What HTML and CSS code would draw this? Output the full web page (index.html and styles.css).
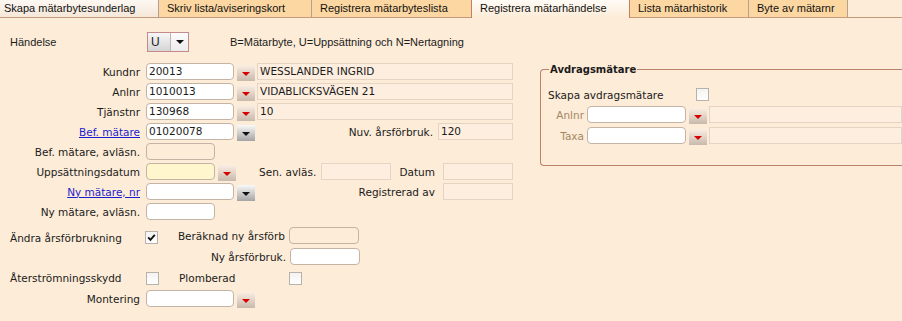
FILE: index.html
```html
<!DOCTYPE html>
<html>

<head>
    <title>Registrera mätarhändelse</title>
    <link rel="stylesheet" href="styles.css">
</head>

<body>
    <nav class="tabs">
        <div class="tab tab-1 is-hover">Skapa mätarbytesunderlag</div>
        <div class="tab tab-2">Skriv lista/aviseringskort</div>
        <div class="tab tab-3">Registrera mätarbyteslista</div>
        <div class="tab tab-4 is-active">Registrera mätarhändelse</div>
        <div class="tab tab-5">Lista mätarhistorik</div>
        <div class="tab tab-6">Byte av mätarnr</div>
    </nav>

    <div class="event-row">
        <span class="event-label">Händelse</span>
        <div class="combo">
            <span class="combo-value">U</span>
            <span class="combo-arrow"></span>
        </div>
        <span class="event-hint">B=Mätarbyte, U=Uppsättning och N=Nertagning</span>
    </div>

    <div class="form-body">
        <div class="form-left">
            <div class="row">
                <span class="lbl">Kundnr</span>
                <span class="inp w-88">20013</span>
                <span class="btn-drop"></span>
                <span class="out out-wide">WESSLANDER INGRID</span>
            </div>
            <div class="row">
                <span class="lbl">Anlnr</span>
                <span class="inp w-88">1010013</span>
                <span class="btn-drop"></span>
                <span class="out out-wide">VIDABLICKSVÄGEN 21</span>
            </div>
            <div class="row">
                <span class="lbl">Tjänstnr</span>
                <span class="inp w-88">130968</span>
                <span class="btn-drop"></span>
                <span class="out out-wide">10</span>
            </div>
            <div class="row">
                <span class="lbl"><a href="#">Bef. mätare</a></span>
                <span class="inp w-88">01020078</span>
                <span class="btn-drop is-dark"></span>
                <span class="lbl-fill">Nuv. årsförbruk.</span>
                <span class="out w-75">120</span>
            </div>
            <div class="row">
                <span class="lbl">Bef. mätare, avläsn.</span>
                <span class="inp w-69 is-readonly"></span>
            </div>
            <div class="row">
                <span class="lbl">Uppsättningsdatum</span>
                <span class="inp w-69 is-date"></span>
                <span class="btn-drop"></span>
                <span class="lbl-sen">Sen. avläs.</span>
                <span class="out w-70"></span>
                <span class="lbl-fill lbl-gap">Datum</span>
                <span class="out w-70"></span>
            </div>
            <div class="row">
                <span class="lbl"><a href="#">Ny mätare, nr</a></span>
                <span class="inp w-88"></span>
                <span class="btn-drop is-dark"></span>
                <span class="lbl-fill lbl-gap">Registrerad av</span>
                <span class="out w-70"></span>
            </div>
            <div class="row">
                <span class="lbl">Ny mätare, avläsn.</span>
                <span class="inp w-69"></span>
            </div>

            <div class="row row-check">
                <span class="lbl lbl-left">Ändra årsförbrukning</span>
                <span class="chk is-checked">
                    <svg width="11" height="11" viewBox="0 0 11 11"><path d="M2.2 5.4 L4.4 7.8 L8.8 2.8" fill="none" stroke="#111" stroke-width="1.9"/></svg>
                </span>
                <div class="calc-group">
                    <span class="lbl-calc">Beräknad ny årsförb</span>
                    <span class="inp w-70 is-readonly"></span>
                </div>
            </div>
            <div class="row row-calc">
                <span class="lbl-calc lbl-long">Ny årsförbruk.</span>
                <span class="inp w-70"></span>
            </div>
            <div class="row row-flags">
                <span class="lbl lbl-left">Återströmningsskydd</span>
                <span class="chk"></span>
                <span class="lbl-plomb">Plomberad</span>
                <span class="chk chk-plain"></span>
            </div>
            <div class="row row-last">
                <span class="lbl">Montering</span>
                <span class="inp w-88"></span>
                <span class="btn-drop"></span>
            </div>
        </div>

        <fieldset class="deduct">
            <legend>Avdragsmätare</legend>
            <div class="fs-row fs-first">
                <span class="fs-lbl-wide">Skapa avdragsmätare</span>
                <span class="chk chk-plain"></span>
            </div>
            <div class="fs-row">
                <span class="fs-lbl">Anlnr</span>
                <span class="inp fs-inp"></span>
                <span class="btn-drop"></span>
                <span class="out out-wide"></span>
            </div>
            <div class="fs-row">
                <span class="fs-lbl">Taxa</span>
                <span class="inp fs-inp"></span>
                <span class="btn-drop"></span>
                <span class="out out-wide"></span>
            </div>
        </fieldset>
    </div>
</body>

</html>
```

FILE: styles.css
```css
/* Reset default margin and padding */
* {
    margin: 0;
    padding: 0;
    box-sizing: border-box;
}

html,
body {
    overflow: hidden;
}

body {
    width: 902px;
    height: 321px;
    background-color: #fdecd7;
    color: #1b1b1b;
    font-family: "DejaVu Sans", sans-serif;
    font-size: 10.5px;
}

/* Tab strip */
.tabs {
    display: flex;
    height: 18px;
    border-bottom: 1px solid #c39a7b;
    font-family: "Liberation Sans", Arial, sans-serif;
    font-size: 11px;
}

.tab {
    height: 17px;
    line-height: 16px;
    padding-left: 8px;
    background-color: #fdd7a1;
    border-right: 1px solid #b3a08f;
    color: #111;
    white-space: nowrap;
}

.tab-1 { width: 159px; padding-left: 4px; }
.tab-2 { width: 153px; }
.tab-3 { width: 160px; }
.tab-4 { width: 159px; }
.tab-5 { width: 119px; }
.tab-6 { width: 99px; }

.tab.is-hover {
    background: linear-gradient(#fdf8f2, #f5e7d9);
}

.tab.is-active {
    height: 18px;
    margin-left: -1px;
    border-left: 1px solid #c08262;
    border-right: 1px solid #c08262;
    background: linear-gradient(#fffbf6, #fdecd7);
}

/* Event selector row */
.event-row {
    display: flex;
    align-items: center;
    height: 20px;
    margin-top: 14px;
    font-family: "Liberation Sans", Arial, sans-serif;
    font-size: 11px;
}

.event-label {
    width: 147px;
    padding-left: 10px;
}

.combo {
    display: flex;
    width: 42px;
    height: 20px;
    border: 1px solid #c58b8b;
}

.combo-value {
    width: 23px;
    padding-left: 3px;
    line-height: 18px;
    font-size: 12px;
    background: linear-gradient(#f7f7f7, #d5d5d5);
    border-right: 1px solid #c7b3b3;
}

.combo-arrow {
    flex: 1;
    display: flex;
    align-items: center;
    justify-content: center;
    background: linear-gradient(#fcfcfc, #ececec);
}

.combo-arrow::after {
    content: "";
    border-left: 4px solid transparent;
    border-right: 4px solid transparent;
    border-top: 4px solid #111;
}

.event-hint {
    margin-left: 41px;
}

/* Form body */
.form-body {
    display: flex;
    align-items: flex-start;
    margin-top: 11px;
}

.form-left {
    width: 513px;
    flex: none;
}

.row {
    display: flex;
    align-items: center;
    height: 17px;
    margin-bottom: 3px;
}

.lbl {
    width: 140px;
    flex: none;
    text-align: right;
    white-space: nowrap;
}

.lbl a {
    color: #1d1dcf;
    text-decoration: underline;
}

.lbl-left {
    text-align: left;
    padding-left: 10px;
}

.inp {
    height: 17px;
    margin-left: 6px;
    padding: 0 2px;
    line-height: 15px;
    background-color: #fff;
    border: 1px solid #c4b4a6;
    border-radius: 4px;
    white-space: nowrap;
}

.inp.is-readonly {
    background-color: transparent;
}

.inp.is-date {
    background-color: #fff6cd;
}

.w-88 { width: 88px; }
.w-69 { width: 69px; }
.w-70 { width: 70px; }
.w-75 { width: 75px; }

.btn-drop {
    display: flex;
    align-items: center;
    justify-content: center;
    align-self: flex-start;
    width: 18px;
    height: 16px;
    margin-top: 2px;
    margin-left: 3px;
    background: linear-gradient(#fbeee2, #c8b9ad);
}

.btn-drop::after {
    content: "";
    margin-top: 2px;
    border-left: 4px solid transparent;
    border-right: 4px solid transparent;
    border-top: 4px solid #d50000;
}

.btn-drop.is-dark {
    background: linear-gradient(#f9f9f9, #a4a4a4);
}

.btn-drop.is-dark::after {
    border-top-color: #111;
}

.out {
    height: 17px;
    padding: 0 2px;
    line-height: 15px;
    background-color: #fdeedf;
    border: 1px solid #e6d4c2;
    white-space: nowrap;
}

.out-wide {
    flex: 1;
    margin-left: 2px;
}

.lbl-fill {
    flex: 1;
    text-align: right;
    padding-right: 5px;
    white-space: nowrap;
}

.lbl-gap {
    padding-right: 8px;
}

.lbl-sen {
    width: 85px;
    padding-left: 23px;
    white-space: nowrap;
}

/* Checkbox rows */
.chk {
    display: flex;
    align-items: center;
    justify-content: center;
    width: 13px;
    height: 13px;
    margin-left: 6px;
    background: linear-gradient(#f3f3f3, #fff);
    border: 1px solid #b9b2ab;
    flex: none;
}

.chk.is-checked {
    margin-left: 5px;
}

.chk-plain {
    margin-left: 0;
}

.row-check {
    height: 21px;
    margin-top: 7px;
    margin-bottom: 0;
}

.calc-group {
    display: flex;
    align-items: center;
    align-self: flex-start;
    height: 17px;
}

.lbl-calc {
    width: 127px;
    text-align: right;
    white-space: nowrap;
}

.calc-group .inp,
.row-calc .inp {
    margin-left: 4px;
}

.lbl-long {
    width: 286px;
}

.row-calc {
    margin-bottom: 3px;
}

.row-flags {
    height: 20px;
    margin-bottom: 2px;
}

.lbl-plomb {
    width: 130px;
    padding-left: 20px;
}

/* Deduction meter group, cut off by the right edge of the window */
.deduct {
    width: 362px;
    flex: none;
    margin-left: 27px;
    padding: 0 0 17px 7px;
    border: 1px solid #b9836b;
    border-right: none;
    border-radius: 4px 0 0 4px;
}

.deduct legend {
    margin-left: 1px;
    padding: 0 1px;
    font-size: 10px;
    font-weight: bold;
    line-height: 13px;
}

.fs-row {
    display: flex;
    align-items: center;
    height: 17px;
    margin-bottom: 4px;
}

.fs-first {
    height: 19px;
    margin-top: 9px;
    margin-bottom: 2px;
}

.fs-lbl-wide {
    width: 148px;
}

.fs-lbl {
    width: 36px;
    text-align: right;
    color: #a38765;
}

.fs-inp {
    width: 99px;
    margin-left: 3px;
}
```
